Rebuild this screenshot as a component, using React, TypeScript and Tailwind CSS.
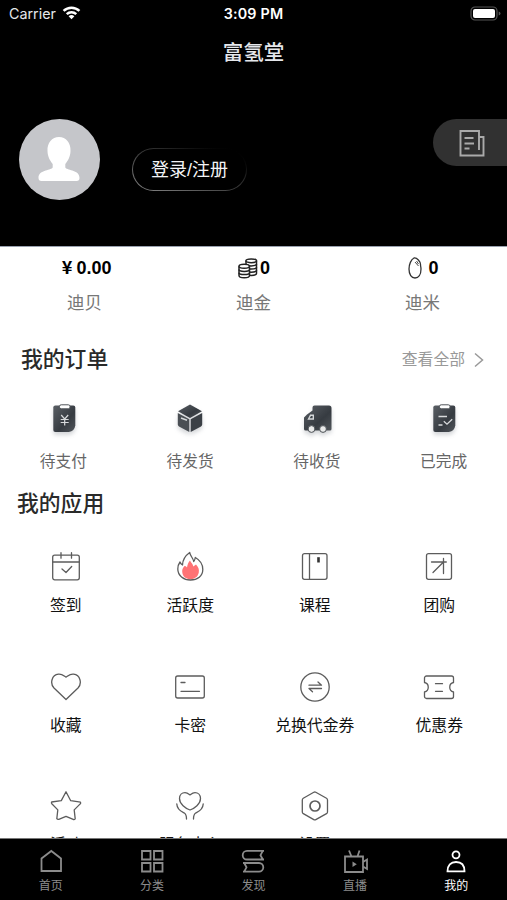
import React from 'react';

interface Item {
  label: string;
  icon: React.ReactNode;
}

const CJK = "font-['Liberation_Sans','Noto_Sans_CJK_SC',sans-serif]";

/* Thin outline icon used in the application grid */
const LineIcon: React.FC<{ children: React.ReactNode }> = ({ children }) => (
  <svg width="32" height="32" viewBox="0 0 32 32" fill="none" stroke="#5c5c5c" strokeWidth="1.3" strokeLinecap="round" strokeLinejoin="round">
    {children}
  </svg>
);

/* Solid dark icon used in the order row */
const OrderIcon: React.FC<{ children: React.ReactNode }> = ({ children }) => (
  <svg className="drop-shadow-[0_3px_2px_rgba(60,70,80,0.22)]" width="32" height="32" viewBox="0 0 32 32" fill="none">
    <defs>
      <linearGradient id="slate" x1="0" y1="0" x2="1" y2="1">
        <stop offset="0" stopColor="#5a5f65" />
        <stop offset="0.6" stopColor="#363b41" />
        <stop offset="1" stopColor="#50555a" />
      </linearGradient>
    </defs>
    {children}
  </svg>
);

const TabIcon: React.FC<{ children: React.ReactNode }> = ({ children }) => (
  <svg width="28" height="28" viewBox="0 0 28 28" fill="none" stroke="currentColor" strokeWidth="1.8">
    {children}
  </svg>
);

const Clipboard = () => (
  <>
    <path d="M7.800 3.500h17.500a2 2 0 0 1 2 2v18q-.8 5.500-6.500 6.500H7.300a2 2 0 0 1-2-2V5.500a2 2 0 0 1 2-2z" fill="url(#slate)" />
    <rect x="11.500" y="2.800" width="10.500" height="4" rx="1.700" fill="#fff" stroke="#50555a" />
  </>
);

const ORDERS: Item[] = [
  {
    label: '待支付',
    icon: (
      <OrderIcon>
        <g transform="translate(1 0)">
          <Clipboard />
          <path d="M13.200 13l3.500 4 3.500-4M12.700 17.500h8M12.700 20.500h8M16.700 17v6.500" stroke="#d8dadc" strokeWidth="1.200" />
        </g>
      </OrderIcon>
    ),
  },
  {
    label: '待发货',
    icon: (
      <OrderIcon>
        <path d="M16 2.500L28 9.200 16 16 4 9.200z" fill="url(#slate)" />
        <path d="M3.800 11l11.500 6.300V30L5 24.400q-1.200-.6-1.200-1.900z" fill="#4a4f54" />
        <path d="M28.200 11l-11.500 6.300V30L27 24.400q1.200-.6 1.200-1.900z" fill="#3b4046" />
        <path d="M7 16l6 2.300" stroke="#d5d8da" strokeWidth="1.500" />
      </OrderIcon>
    ),
  },
  {
    label: '待收货',
    icon: (
      <OrderIcon>
        <path d="M13.500 3.500h14.500a2.500 2.500 0 0 1 2.500 2.500v21a1.500 1.500 0 0 1-1.500 1.500H4.500a1.500 1.500 0 0 1-1.500-1.500V15.500L6 12.500l5.500-4V5.500a2 2 0 0 1 2-2z" fill="url(#slate)" />
        <path d="M7.500 17l2-3.700h2.800V17z" fill="#3c4248" stroke="#d5d8da" strokeWidth="1.400" />
        <circle cx="10.500" cy="27" r="3.400" fill="#e9eaea" stroke="#4b5055" />
        <circle cx="22" cy="27" r="3.400" fill="#e9eaea" stroke="#4b5055" />
      </OrderIcon>
    ),
  },
  {
    label: '已完成',
    icon: (
      <OrderIcon>
        <Clipboard />
        <path d="M10.500 14.500h8.500M10.500 23h4M15.800 19.200l3.200 3 5.200-5" stroke="#d8dadc" strokeWidth="1.300" />
      </OrderIcon>
    ),
  },
];

const APPS: Item[] = [
  {
    label: '签到',
    icon: (
      <LineIcon>
        <rect x="2.700" y="4.200" width="26.600" height="24.600" rx="2" />
        <path d="M2.700 11h26.600M11 1.700v5.500M21.500 1.700v5.500M12 18l4 3.500 5.700-6" />
      </LineIcon>
    ),
  },
  {
    label: '活跃度',
    icon: (
      <LineIcon>
        <path d="M16 9.500c.8 2 3 3.500 3.300 6l2.700-2c2.500 2.500 3.300 5 2.800 8-.8 4.500-4.800 6.800-8.300 6.800s-8.300-2-8.300-8c0-2 .8-3.800 2.300-5.300 1.200 0 1.700.5 2.500 1.500.3-2.500 1.300-5 3-7z" fill="#ff7375" stroke="none" />
        <path d="M15.700 1.500c.5 3.500 3.500 5.500 4 9 1-1 1.300-2.300 1.600-4 4.500 2.500 7.500 7 7.500 12 0 6.500-5.300 10.500-12.300 10.500S3.800 24.500 3.800 18c0-3 .7-5 2.200-7 .5 1.500 1 2.300 2.500 3C8.700 8.500 11.500 4.500 15.700 1.500z" />
      </LineIcon>
    ),
  },
  {
    label: '课程',
    icon: (
      <LineIcon>
        <rect x="3.500" y="2.700" width="24.500" height="25.600" rx="2" />
        <path d="M10.500 2.700v25.600" />
        <path d="M19.500 6.200v5.300" strokeWidth="2.600" strokeLinecap="butt" stroke="#333" />
      </LineIcon>
    ),
  },
  {
    label: '团购',
    icon: (
      <LineIcon>
        <rect x="3.500" y="2.700" width="25" height="25.600" rx="2" />
        <path d="M8.500 11h14.800M20.500 7.500v15M20.500 11L10 21.500" />
      </LineIcon>
    ),
  },
  {
    label: '收藏',
    icon: (
      <LineIcon>
        <path d="M16 28.500L4 17C-.2 12.500 1.500 4 8.500 3.200c3.500-.4 5.500 1.800 7.500 3 2-1.200 4-3.400 7.500-3 7 .8 8.700 9.300 4.500 13.800z" />
      </LineIcon>
    ),
  },
  {
    label: '卡密',
    icon: (
      <LineIcon>
        <rect x="1.700" y="5" width="28.600" height="22" rx="2" />
        <path d="M7 11.500h4M7 20.300h18.500" />
      </LineIcon>
    ),
  },
  {
    label: '兑换代金券',
    icon: (
      <LineIcon>
        <circle cx="16" cy="16" r="14.200" />
        <path d="M10 14.200h12.500l-3.500-3.200M22.500 17.500H10l3.500 3.300" />
      </LineIcon>
    ),
  },
  {
    label: '优惠券',
    icon: (
      <LineIcon>
        <path d="M3.500 5h25a2 2 0 0 1 2 2v4.500c-5 1-5 8.500 0 9.500v4.500a2 2 0 0 1-2 2h-25a2 2 0 0 1-2-2V21c5-1 5-8.500 0-9.500V7a2 2 0 0 1 2-2z" />
        <path d="M12.500 12.700h7M12.500 20.300h7" />
      </LineIcon>
    ),
  },
  {
    label: '活动',
    icon: (
      <LineIcon>
        <path d="M16 1.800l4.700 8.900 9.800 1.500q.5 1-.3 1.700l-6 6 1 9q-1 1.200-2 .5L16 26.300l-7.200 3.100q-1.300.3-2-.7l1-8.800-6-6.200q-.7-.9-.2-1.700l9.700-1.400z" />
      </LineIcon>
    ),
  },
  {
    label: '服务中心',
    icon: (
      <LineIcon>
        <path d="M16 20C11.500 18.500 5.500 14 5.500 8.500c0-3.500 2.500-5.800 5.500-5.800 2.500 0 3.500 1.100 5 2.200 1.500-1.100 2.500-2.200 5-2.200 3 0 5.500 2.300 5.500 5.800C26.500 14 20.500 18.500 16 20z" />
        <path d="M2.800 14c.3 6 4.500 7.500 7.500 9 1.700 1 2.200 2.500 2.200 6M29.200 14c-.3 6-4.500 7.500-7.500 9-1.700 1-2.200 2.500-2.200 6" />
      </LineIcon>
    ),
  },
  {
    label: '设置',
    icon: (
      <LineIcon>
        <path d="M14.800 2.300a2 2 0 0 1 2 0l10.700 5.900a2 2 0 0 1 1 1.700v12a2 2 0 0 1-1 1.700l-10.700 6a2 2 0 0 1-2 0L4.300 23.600a2 2 0 0 1-1-1.700v-12a2 2 0 0 1 1-1.700z" />
        <circle cx="16" cy="16" r="5" strokeWidth="1.700" />
      </LineIcon>
    ),
  },
];

const TABS: Item[] = [
  { label: '首页', icon: <TabIcon><path d="M4.500 24V11.500L14.300 4l9.700 7.500V24z" /></TabIcon> },
  {
    label: '分类',
    icon: (
      <TabIcon>
        <path d="M4 4h8.500v8.500H4zM16 4h8.500v8.500H16zM4 16h8.500v8.500H4zM16 16h8.500v8.500H16z" />
      </TabIcon>
    ),
  },
  {
    label: '发现',
    icon: (
      <TabIcon>
        <path d="M25 3.900H8a4.300 4.300 0 0 0 0 8.600h17M23.800 3.900l-2.300 4.300 2.300 4.300M4 16h16a4.300 4.300 0 0 1 0 8.600H4M5.200 16l2.300 4.300-2.300 4.300" />
      </TabIcon>
    ),
  },
  {
    label: '直播',
    icon: (
      <TabIcon>
        <path d="M4 9.500h18V25H4zM8 3.500l2.500 6M18.500 3.500l-2 6M22 15l4-2.500v9.500l-4-2.500" />
        <path d="M11.500 14.500V20l4.300-2.700z" fill="currentColor" stroke="none" />
      </TabIcon>
    ),
  },
  {
    label: '我的',
    icon: (
      <TabIcon>
        <circle cx="14" cy="7.800" r="3.500" />
        <path d="M5.500 24.300c0-6 3.300-9.300 8.500-9.300s8.500 3.300 8.500 9.300z" />
      </TabIcon>
    ),
  },
];

const StatusBar = () => (
  <div className="grid h-7 grid-cols-3 items-center px-[9px] font-['Inter',sans-serif] text-white">
    <div className="flex items-center gap-[6px]">
      <span className="text-[14.3px] leading-none text-gray-200">Carrier</span>
      <svg className="-mt-[2px]" width="19" height="14" viewBox="0 0 20 15" fill="none" stroke="#fff" strokeWidth="2.700">
        <path d="M1.500 5.200a12.300 12.300 0 0 1 17 0M4.900 8.700a7.400 7.400 0 0 1 10.200 0" />
        <path d="M10 14.300l-3.100-3.200a4.500 4.500 0 0 1 6.200 0z" fill="#fff" stroke="none" />
      </svg>
    </div>
    <span className="text-center text-[14.3px] leading-none font-semibold tracking-[0.2px]">3:09 PM</span>
    <svg className="-mt-[2px] -mr-[3px] ml-auto" width="31" height="15" viewBox="0 0 31 15" fill="none">
      <rect x="1" y="1" width="26" height="13" rx="4" stroke="#555" strokeWidth="1.200" />
      <rect x="3" y="3" width="22" height="9" rx="2" fill="#fff" />
      <path d="M28.700 5.500v4q1.800-.7 1.800-2t-1.800-2z" fill="#555" />
    </svg>
  </div>
);

const Header = () => (
  <header className="h-[246px] shrink-0 bg-black text-white">
    <StatusBar />
    <h1 className="h-12 pt-px text-center text-[20.5px] leading-[48px] font-medium text-gray-200">富氢堂</h1>
    <div className="flex pt-[43px] pl-[19px]">
      <svg width="81" height="81" viewBox="0 0 81 81">
        <circle cx="40.500" cy="40.500" r="40.500" fill="#c5c6ca" />
        <path d="M40 18c7 0 12 6 11.500 14-.2 6-2.500 9.500-5.200 13v3.500c3 3.700 14.200 2 14.200 10.500 0 2-1 3-3 3H22.500c-2 0-3-1-3-3 0-8.500 11.200-6.800 14.200-10.500V45c-2.700-3.500-5-7-5.200-13C28 24 33 18 40 18z" fill="#fff" />
      </svg>
      <button className="mt-[29px] ml-8 h-[43px] w-[115px] rounded-full bg-linear-to-tr from-[#8a8a8a] via-[#2c2c2c] via-60% to-black p-px">
        <span className="flex h-full w-full items-center justify-center rounded-full bg-black pt-px text-[18px] text-gray-100">登录/注册</span>
      </button>
      <button className="ml-auto flex h-[47px] w-[74px] items-center rounded-l-full bg-[#313131] pl-[26px]">
        <svg width="27" height="30" viewBox="0 0 27 30" fill="none" stroke="#aaa" strokeWidth="1.900">
          <path d="M20 9V3H1.500v24.500H24.500V9h-4.500v13M5.500 10h9M5.500 15.500h9.500M5.500 20.500h5" />
        </svg>
      </button>
    </div>
  </header>
);

const CoinIcon = () => (
  <svg width="20" height="21" viewBox="0 0 20 21" fill="#fff" stroke="#222" strokeWidth="1.500">
    <path d="M8 2.800v12.500c0 2.800 10.500 2.800 10.500 0V2.800" />
    <ellipse cx="13.200" cy="2.800" rx="5.300" ry="1.900" />
    <path d="M8 6c0 2.500 10.500 2.500 10.500 0M8 9.200c0 2.500 10.500 2.500 10.500 0M8 12.300c0 2.500 10.500 2.500 10.500 0" fill="none" />
    <path d="M1 8.300v9.200c0 3 10.500 3 10.500 0V8.300" />
    <ellipse cx="6.200" cy="8.300" rx="5.200" ry="2" />
    <path d="M1 11.500c0 2.500 10.500 2.500 10.500 0M1 14.700c0 2.500 10.500 2.500 10.500 0" fill="none" />
  </svg>
);

const RiceIcon = () => (
  <svg width="14" height="22" viewBox="0 0 14 22" fill="none" stroke="#333" strokeWidth="1.300">
    <path d="M6 1C3 2.500 1 7.500 1 12c0 5.500 2.500 9 6 9s6-3.500 6-9c0-1.500-.5-3-.5-4.500C12.500 4.500 9 .5 6 1z" />
    <path d="M7 5l3.500 4M8.500 4l2 3" strokeWidth="0.900" />
  </svg>
);

const Stats = () => (
  <section className="grid h-[79px] shrink-0 grid-cols-3 border-t border-gray-400 pt-2 text-center">
    <div>
      <div className="flex h-[26px] items-center justify-center gap-[4px] pl-1 text-[18px] font-bold text-black">
        <span className="mb-[4px] w-[11px] font-['Noto_Sans_CJK_SC',sans-serif] leading-none">¥</span>
        <span>0.00</span>
      </div>
      <p className="mt-[9px] text-[17.5px] leading-[26px] text-[#777]">迪贝</p>
    </div>
    <div>
      <div className="flex h-[26px] items-center justify-center gap-[2px] pl-px text-[18px] font-bold text-black">
        <CoinIcon />
        <span>0</span>
      </div>
      <p className="mt-[9px] text-[17.5px] leading-[26px] text-[#777]">迪金</p>
    </div>
    <div>
      <div className="flex h-[26px] items-center justify-center gap-[6px] pl-[2px] text-[18px] font-bold text-black">
        <RiceIcon />
        <span>0</span>
      </div>
      <p className="mt-[9px] text-[17.5px] leading-[26px] text-[#777]">迪米</p>
    </div>
  </section>
);

const App: React.FC = () => {
  return (
    <div className={`${CJK} flex h-[900px] w-full flex-col overflow-hidden bg-white`}>
      <Header />
      <Stats />

      {/* Orders */}
      <section className="h-[161px] shrink-0 pt-[19px]">
        <div className="flex h-8 items-center justify-between pr-[23px] pl-[21px]">
          <h2 className="text-[21.8px] font-medium text-[#2a2a2a]">我的订单</h2>
          <div className="flex items-center gap-[9px] text-[15.8px] text-[#999]">
            查看全部
            <svg width="10" height="16" viewBox="0 0 10 16" fill="none" stroke="#999" strokeWidth="1.500">
              <path d="M1 1.500L8.500 8 1 14.500" />
            </svg>
          </div>
        </div>
        <div className="mt-[27px] grid grid-cols-4">
          {ORDERS.map((item) => (
            <div key={item.label} className="flex flex-col items-center">
              <div className="flex h-[30px] items-center">
                {item.icon}
              </div>
              <span className="mt-[17px] text-[15.7px] leading-6 text-[#666]">{item.label}</span>
            </div>
          ))}
        </div>
      </section>

      {/* Applications, scrolled under the tab bar */}
      <section className="min-h-0 flex-1 overflow-hidden">
        <h2 className="pl-[17px] text-[21.8px] leading-9 font-medium text-[#2a2a2a]">我的应用</h2>
        <div className="mt-[29px] ml-[3.500px] grid w-[498px] grid-cols-4">
          {APPS.map((item) => (
            <div key={item.label} className="flex h-[119.500px] flex-col items-center">
              {item.icon}
              <span className="mt-[11px] text-[15.8px] leading-6 text-[#111]">{item.label}</span>
            </div>
          ))}
        </div>
      </section>

      <nav className="grid h-[62px] shrink-0 grid-cols-5 border-t border-[#777] bg-black pt-[8px]">
        {TABS.map((tab) => (
          <button key={tab.label} className={`flex flex-col items-center ${tab.label === '我的' ? 'text-white' : 'text-[#8c8c8c]'}`}>
            {tab.icon}
            <span className="mt-px text-[12px] leading-[20px]">{tab.label}</span>
          </button>
        ))}
      </nav>
    </div>
  );
};

export default App;
